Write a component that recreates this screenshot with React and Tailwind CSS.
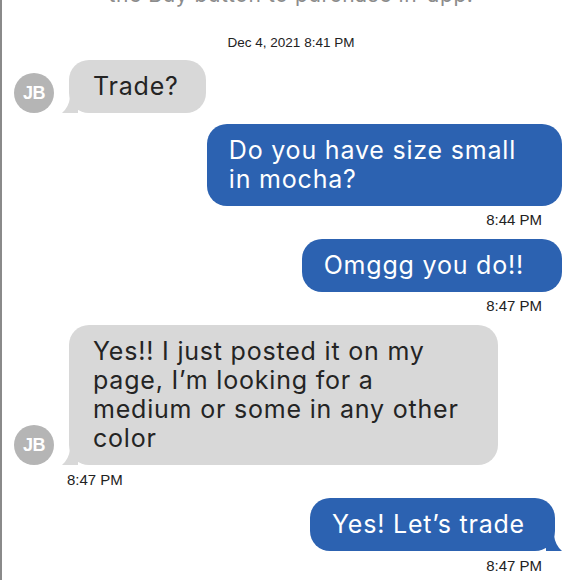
import React from 'react'

const bubbleFont = { fontFamily: 'Inter, "Open Sans", sans-serif' }

const Avatar = () => (
  <div className="w-[40px] h-[40px] shrink-0 rounded-full bg-[#b5b5b5] flex items-center justify-center text-white text-[18px] font-bold tracking-tight font-['Liberation_Sans',sans-serif]">
    JB
  </div>
)

const TailLeft = ({ color }) => (
  <svg className="absolute left-[-7px] bottom-0" width="16" height="22" viewBox="0 0 16 22">
    <path d="M8 0 L16 0 L16 22 L0 22 Q7 16 8 6 Z" fill={color} />
  </svg>
)

const TailRight = ({ color }) => (
  <svg className="absolute right-[-7px] bottom-0" width="16" height="22" viewBox="0 0 16 22">
    <path d="M8 0 L0 0 L0 22 L16 22 Q9 16 8 6 Z" fill={color} />
  </svg>
)

const Incoming = ({ lines, avatar, tail, pr }) => (
  <div className="flex items-end pl-[12px]">
    {avatar ? <Avatar /> : <div className="w-[40px] shrink-0" />}
    <div
      className={`relative ml-[15px] bg-[#d8d8d8] rounded-[20px] pl-[24px] ${pr} py-[12px] text-[25px] leading-[29px] text-[#242424] tracking-[0.8px]`}
      style={bubbleFont}
    >
      {tail && <TailLeft color="#d8d8d8" />}
      {lines.map((l, i) => (
        <div key={i} className="relative whitespace-nowrap">{l}</div>
      ))}
    </div>
  </div>
)

const Outgoing = ({ lines, tail, pr }) => (
  <div className={`flex justify-end ${tail ? 'pr-[25px]' : 'pr-[18px]'}`}>
    <div
      className={`relative bg-[#2c62b1] rounded-[20px] pl-[22px] ${pr} py-[12px] text-[25px] leading-[29px] text-white tracking-[0.8px]`}
      style={bubbleFont}
    >
      {tail && <TailRight color="#2c62b1" />}
      {lines.map((l, i) => (
        <div key={i} className="relative whitespace-nowrap">{l}</div>
      ))}
    </div>
  </div>
)

const Time = ({ children, right }) => (
  <div
    className={`text-[15px] leading-[18px] text-[#222] font-['Liberation_Sans',sans-serif] ${right ? 'text-right pr-[38px]' : 'pl-[65px]'}`}
  >
    {children}
  </div>
)

export default function App() {
  return (
    <div className="w-[580px] h-[580px] overflow-hidden bg-white border-l-2 border-[#8a8a8a]">
      <div
        className="text-center text-[21px] leading-[24px] text-[#8c8c8c] mt-[-17px] tracking-[0.6px]"
        style={bubbleFont}
      >
        the Buy button to purchase in-app.
      </div>
      <div className="mt-[28px] text-center text-[13.5px] leading-[16px] text-[#222] font-['Liberation_Sans',sans-serif]">
        Dec 4, 2021 8:41 PM
      </div>
      <div className="mt-[9px]">
        <Incoming lines={['Trade?']} avatar tail pr="pr-[27px]" />
      </div>
      <div className="mt-[11px]">
        <Outgoing lines={['Do you have size small', 'in mocha?']} pr="pr-[46px]" />
      </div>
      <div className="mt-[5px]">
        <Time right>8:44 PM</Time>
      </div>
      <div className="mt-[10px]">
        <Outgoing lines={['Omggg you do!!']} pr="pr-[38px]" />
      </div>
      <div className="mt-[5px]">
        <Time right>8:47 PM</Time>
      </div>
      <div className="mt-[10px]">
        <Incoming
          lines={['Yes!! I just posted it on my', 'page, I’m looking for a', 'medium or some in any other', 'color']}
          avatar
          tail
          pr="pr-[39px]"
        />
      </div>
      <div className="mt-[6px]">
        <Time>8:47 PM</Time>
      </div>
      <div className="mt-[9px]">
        <Outgoing lines={['Yes! Let’s trade']} tail pr="pr-[30px]" />
      </div>
      <div className="mt-[6px]">
        <Time right>8:47 PM</Time>
      </div>
    </div>
  )
}
